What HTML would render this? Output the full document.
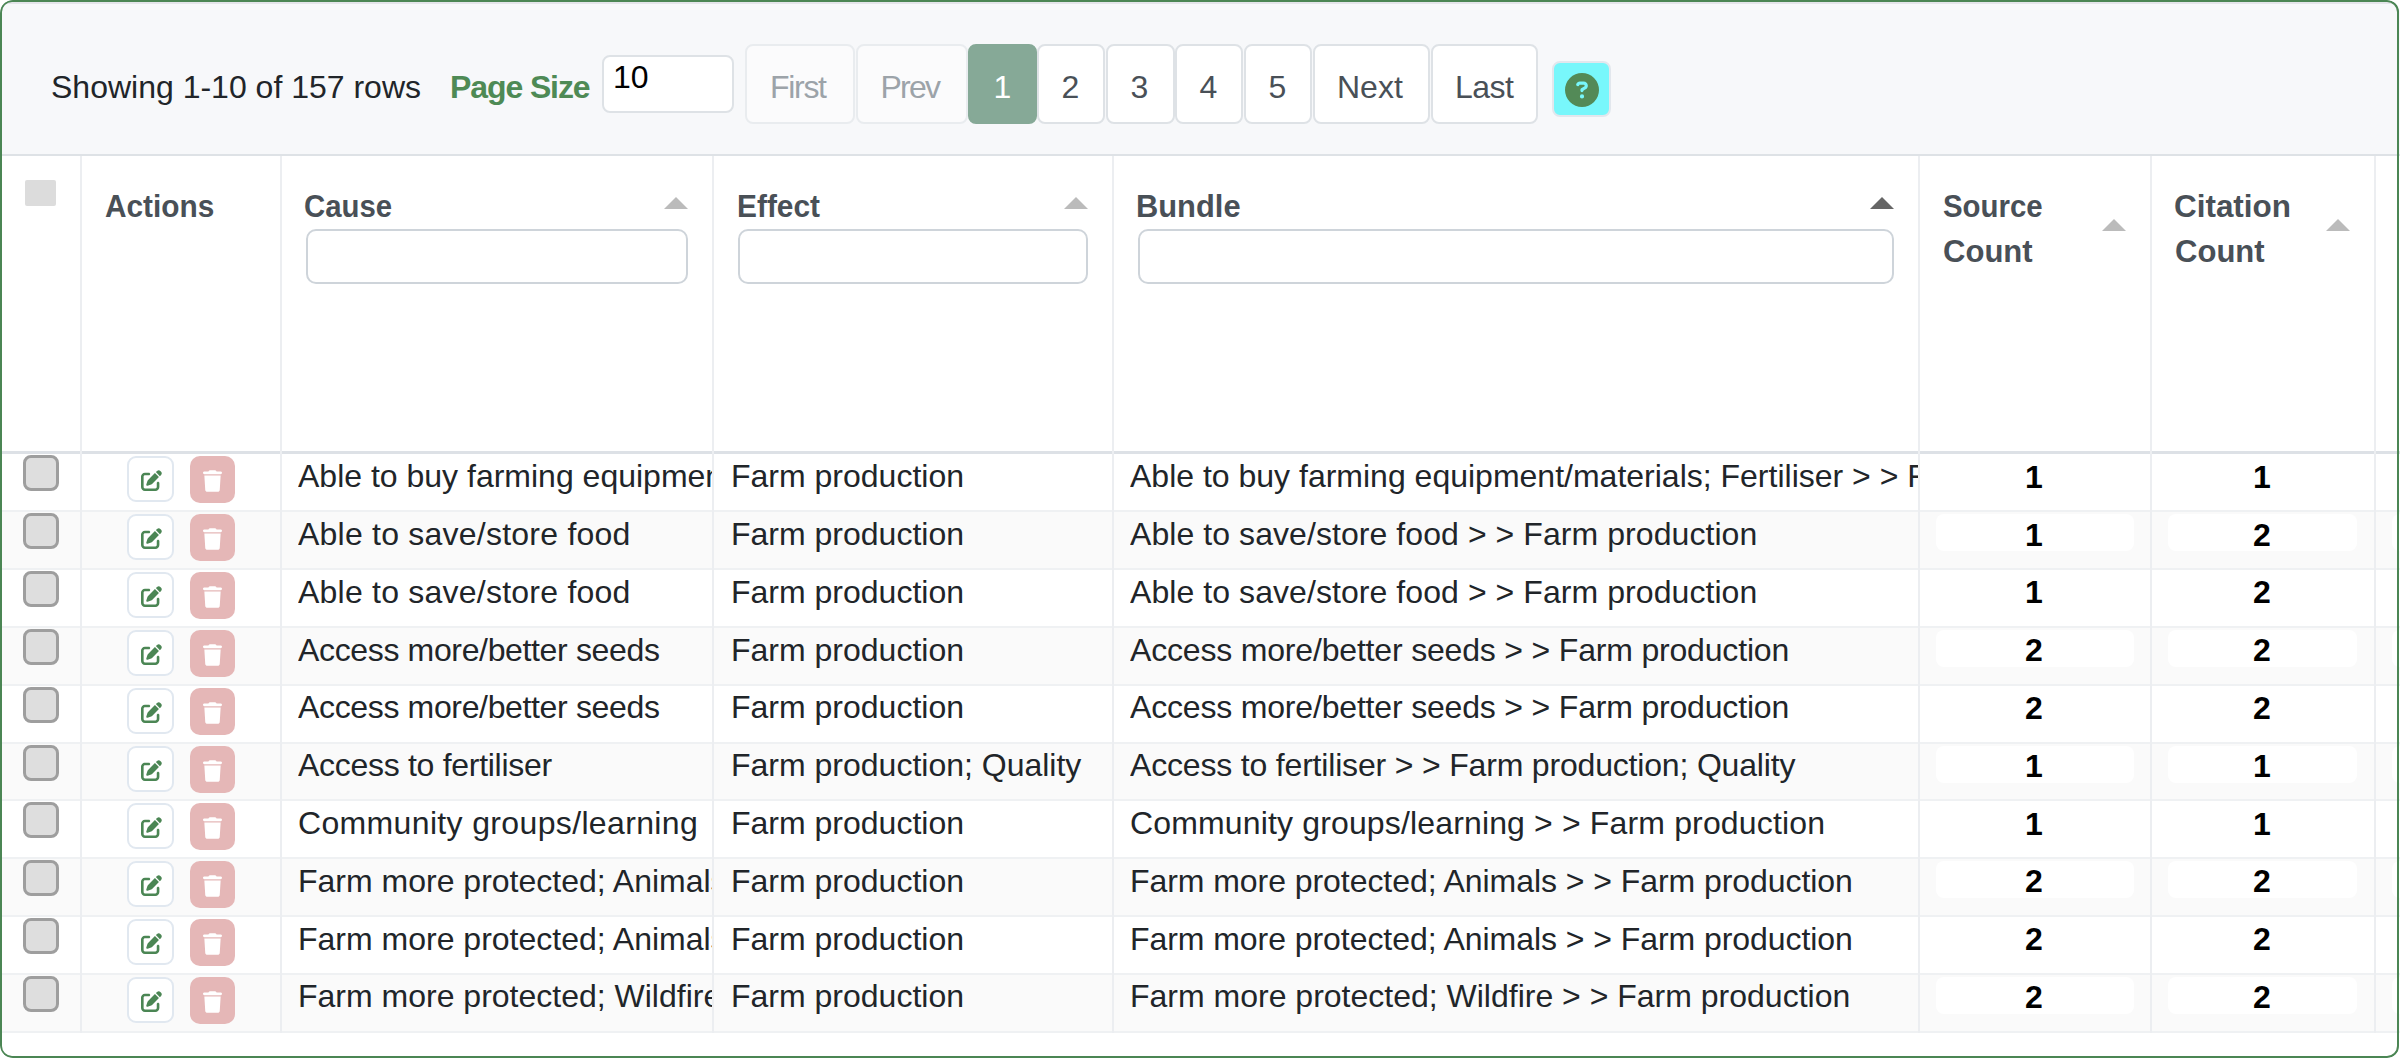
<!DOCTYPE html>
<html><head><meta charset="utf-8"><title>Table</title>
<style>
html,body{margin:0;padding:0;}
body{width:2400px;height:1058px;overflow:hidden;background:#fff;position:relative;font-family:"Liberation Sans",sans-serif;}
.a{position:absolute;}
.t{position:absolute;white-space:nowrap;font-size:32px;line-height:36px;color:#212529;}
.hd{font-weight:bold;color:#495057;}
.pg{position:absolute;top:44px;height:80px;box-sizing:border-box;border:2px solid #dee2e6;border-radius:8px;background:#fff;}
.pgd{background:#fbfbfc;border-color:#e9ecef;}
.pgt{position:absolute;white-space:nowrap;font-size:32px;line-height:36px;color:#495057;top:69px;}
.inp{position:absolute;box-sizing:border-box;border:2px solid #ced4da;border-radius:10px;background:#fff;}
.vl{position:absolute;top:156px;height:877px;width:2px;background:#eceef1;}
.hl{position:absolute;left:0;width:2400px;height:2px;background:#eff1f3;}
.stripe{position:absolute;left:0;width:2400px;background:#fafafa;}
.cb{position:absolute;left:23px;width:36px;height:36px;box-sizing:border-box;border:3px solid #9e9e9e;border-radius:8px;background:#dedede;}
.eb{position:absolute;left:127px;width:47px;height:46px;box-sizing:border-box;border:2px solid #e1e8f0;border-radius:9px;background:#fff;}
.eb svg{position:absolute;left:11.5px;top:12px;}
.db{position:absolute;left:190px;width:45px;height:47px;border-radius:10px;background:#e5b7b7;}
.db svg{position:absolute;left:13px;top:14px;}
.cell{position:absolute;white-space:nowrap;overflow:hidden;font-size:32px;line-height:36px;color:#212529;}
.num{position:absolute;font-size:32px;line-height:36px;color:#000;font-weight:bold;text-align:center;}
.wb{position:absolute;height:37px;border-radius:8px;background:#fff;}
.arr{position:absolute;width:0;height:0;border-left:12px solid transparent;border-right:12px solid transparent;border-bottom:12px solid #bbb;}
</style></head><body>

<div class="a" style="left:0;top:0;width:2400px;height:1058px;border-radius:13px;overflow:hidden">
<div class="a" style="left:0;top:0;width:2400px;height:154px;background:#f7f8fa"></div>
<div class="a" style="left:0;top:2px;width:2400px;height:2px;background:#e4e5ea"></div>
<div class="a" style="left:0;top:154px;width:2400px;height:2px;background:#dee2e6"></div>
<div class="t" style="left:51px;top:69px">Showing 1-10 of 157 rows</div>
<div class="t" style="left:450px;top:69px;font-weight:bold;color:#4e8a55;letter-spacing:-1.1px">Page Size</div>
<div class="a" style="left:602px;top:55px;width:132px;height:58px;box-sizing:border-box;border:2px solid #dee2e6;border-radius:8px;background:#fff"></div>
<div class="t" style="left:613px;top:59px;color:#000">10</div>
<div class="pg pgd" style="left:745px;width:110px;"></div>
<div class="pgt" style="left:770px;color:#9ca3a9;letter-spacing:-1.3px;">First</div>
<div class="pg pgd" style="left:856px;width:112px;"></div>
<div class="pgt" style="left:880.5px;color:#9ca3a9;letter-spacing:-1.8px;">Prev</div>
<div class="pg" style="left:968px;width:69px;background:#86a997;border-color:#86a997;"></div>
<div class="pgt" style="left:993.5px;color:#fff;">1</div>
<div class="pg" style="left:1037px;width:68px;"></div>
<div class="pgt" style="left:1061.5px;color:#495057;">2</div>
<div class="pg" style="left:1106px;width:68.5px;"></div>
<div class="pgt" style="left:1130.5px;color:#495057;">3</div>
<div class="pg" style="left:1175px;width:68px;"></div>
<div class="pgt" style="left:1199.5px;color:#495057;">4</div>
<div class="pg" style="left:1244px;width:68px;"></div>
<div class="pgt" style="left:1268.5px;color:#495057;">5</div>
<div class="pg" style="left:1313px;width:117px;"></div>
<div class="pgt" style="left:1337px;color:#495057;letter-spacing:0px;">Next</div>
<div class="pg" style="left:1431px;width:106.5px;"></div>
<div class="pgt" style="left:1455px;color:#495057;letter-spacing:-0.5px;">Last</div>
<div class="a" style="left:1552px;top:61px;width:59px;height:56px;box-sizing:border-box;border:2px solid #e2e7ed;border-radius:8px;background:#78f7fb"></div>
<div class="a" style="left:1565px;top:73px;width:34px;height:34px"><svg viewBox="0 0 512 512" width="34" height="34"><path fill="#538a57" d="M256 512A256 256 0 1 0 256 0a256 256 0 1 0 0 512zM169.8 165.3c7.9-22.3 29.1-37.3 52.8-37.3h58.3c34.9 0 63.1 28.3 63.1 63.1c0 22.6-12.1 43.5-31.7 54.8L280 264.4c-.2 13-10.9 23.6-24 23.6c-13.3 0-24-10.7-24-24V250.5c0-8.6 4.6-16.5 12.1-20.8l44.3-25.4c4.7-2.7 7.6-7.7 7.6-13.1c0-8.4-6.8-15.1-15.1-15.1H222.6c-3.4 0-6.4 2.1-7.5 5.3l-.4 1.2c-4.4 12.5-18.2 19-30.6 14.6s-19-18.2-14.6-30.6l.4-1.2zM224 352a32 32 0 1 1 64 0 32 32 0 1 1 -64 0z"/></svg></div>
<div class="a" style="left:25px;top:180px;width:31px;height:26px;background:#dcdcdc;border-radius:2px"></div>
<div class="t hd" style="left:105px;top:188px;transform:scaleX(0.932);transform-origin:0 0">Actions</div>
<div class="t hd" style="left:304px;top:188px;transform:scaleX(0.917);transform-origin:0 0">Cause</div>
<div class="t hd" style="left:737px;top:188px;transform:scaleX(0.934);transform-origin:0 0">Effect</div>
<div class="t hd" style="left:1136px;top:188px;transform:scaleX(0.964);transform-origin:0 0">Bundle</div>
<div class="t hd" style="left:1943px;top:188px;transform:scaleX(0.919);transform-origin:0 0">Source</div>
<div class="t hd" style="left:1943px;top:233px;transform:scaleX(0.97);transform-origin:0 0">Count</div>
<div class="t hd" style="left:2174px;top:188px;transform:scaleX(0.982);transform-origin:0 0">Citation</div>
<div class="t hd" style="left:2175px;top:233px;transform:scaleX(0.97);transform-origin:0 0">Count</div>
<div class="arr" style="left:664px;top:197px"></div>
<div class="arr" style="left:1064px;top:197px"></div>
<div class="arr" style="left:1870px;top:197px;border-bottom-color:#666"></div>
<div class="arr" style="left:2102px;top:219px"></div>
<div class="arr" style="left:2326px;top:219px"></div>
<div class="inp" style="left:306px;top:229px;width:382px;height:55px"></div>
<div class="inp" style="left:738px;top:229px;width:350px;height:55px"></div>
<div class="inp" style="left:1138px;top:229px;width:756px;height:55px"></div>
<div class="a" style="left:0;top:451px;width:2400px;height:3px;background:#dde1e6"></div>
<div class="hl" style="top:510px"></div>
<div class="cb" style="top:455px"></div>
<div class="eb" style="top:456px"><svg viewBox="0 0 512 512" width="21" height="21"><path fill="#4b8654" d="M471.6 21.7c-21.9-21.9-57.3-21.9-79.2 0L362.3 51.7l97.9 97.9 30.1-30.1c21.9-21.9 21.9-57.3 0-79.2L471.6 21.7zm-299.2 220c-6.1 6.1-10.8 13.6-13.5 21.9l-29.6 88.8c-2.9 8.6-.6 18.1 5.8 24.6s15.9 8.7 24.6 5.8l88.8-29.6c8.2-2.7 15.7-7.4 21.9-13.5L437.7 172.3 339.7 74.3 172.4 241.7zM96 64C43 64 0 107 0 160V416c0 53 43 96 96 96H352c53 0 96-43 96-96V320c0-17.7-14.3-32-32-32s-32 14.3-32 32v96c0 17.7-14.3 32-32 32H96c-17.7 0-32-14.3-32-32V160c0-17.7 14.3-32 32-32h96c17.7 0 32-14.3 32-32s-14.3-32-32-32H96z"/></svg></div>
<div class="db" style="top:456px"><svg viewBox="0 0 448 512" width="19" height="22"><path fill="#fff" d="M135.2 17.7L128 32H32C14.3 32 0 46.3 0 64S14.3 96 32 96H416c17.7 0 32-14.3 32-32s-14.3-32-32-32H320l-7.2-14.3C307.4 6.8 296.3 0 284.2 0H163.8c-12.1 0-23.2 6.8-28.6 17.7zM416 128H32L53.2 467c1.6 25.3 22.6 45 47.9 45H346.9c25.3 0 46.3-19.7 47.9-45L416 128z"/></svg></div>
<div class="cell" style="left:298px;top:458.4px;width:414px;letter-spacing:0px">Able to buy farming equipment/materials; Fertiliser</div>
<div class="cell" style="left:731px;top:458.4px;width:382px">Farm production</div>
<div class="cell" style="left:1130px;top:458.4px;width:788px;letter-spacing:0px">Able to buy farming equipment/materials; Fertiliser &gt; &gt; Farm production</div>
<div class="num" style="left:1918px;top:459px;width:232px">1</div>
<div class="num" style="left:2150px;top:459px;width:224px">1</div>
<div class="stripe" style="top:512px;height:58px"></div>
<div class="wb" style="left:1936px;top:514px;width:198px"></div>
<div class="wb" style="left:2168px;top:514px;width:189px"></div>
<div class="wb" style="left:2392px;top:514px;width:40px"></div>
<div class="hl" style="top:568px"></div>
<div class="cb" style="top:513px"></div>
<div class="eb" style="top:514px"><svg viewBox="0 0 512 512" width="21" height="21"><path fill="#4b8654" d="M471.6 21.7c-21.9-21.9-57.3-21.9-79.2 0L362.3 51.7l97.9 97.9 30.1-30.1c21.9-21.9 21.9-57.3 0-79.2L471.6 21.7zm-299.2 220c-6.1 6.1-10.8 13.6-13.5 21.9l-29.6 88.8c-2.9 8.6-.6 18.1 5.8 24.6s15.9 8.7 24.6 5.8l88.8-29.6c8.2-2.7 15.7-7.4 21.9-13.5L437.7 172.3 339.7 74.3 172.4 241.7zM96 64C43 64 0 107 0 160V416c0 53 43 96 96 96H352c53 0 96-43 96-96V320c0-17.7-14.3-32-32-32s-32 14.3-32 32v96c0 17.7-14.3 32-32 32H96c-17.7 0-32-14.3-32-32V160c0-17.7 14.3-32 32-32h96c17.7 0 32-14.3 32-32s-14.3-32-32-32H96z"/></svg></div>
<div class="db" style="top:514px"><svg viewBox="0 0 448 512" width="19" height="22"><path fill="#fff" d="M135.2 17.7L128 32H32C14.3 32 0 46.3 0 64S14.3 96 32 96H416c17.7 0 32-14.3 32-32s-14.3-32-32-32H320l-7.2-14.3C307.4 6.8 296.3 0 284.2 0H163.8c-12.1 0-23.2 6.8-28.6 17.7zM416 128H32L53.2 467c1.6 25.3 22.6 45 47.9 45H346.9c25.3 0 46.3-19.7 47.9-45L416 128z"/></svg></div>
<div class="cell" style="left:298px;top:516.17px;width:414px;letter-spacing:0.23px">Able to save/store food</div>
<div class="cell" style="left:731px;top:516.17px;width:382px">Farm production</div>
<div class="cell" style="left:1130px;top:516.17px;width:788px;letter-spacing:0.07px">Able to save/store food &gt; &gt; Farm production</div>
<div class="num" style="left:1918px;top:517px;width:232px">1</div>
<div class="num" style="left:2150px;top:517px;width:224px">2</div>
<div class="hl" style="top:626px"></div>
<div class="cb" style="top:571px"></div>
<div class="eb" style="top:572px"><svg viewBox="0 0 512 512" width="21" height="21"><path fill="#4b8654" d="M471.6 21.7c-21.9-21.9-57.3-21.9-79.2 0L362.3 51.7l97.9 97.9 30.1-30.1c21.9-21.9 21.9-57.3 0-79.2L471.6 21.7zm-299.2 220c-6.1 6.1-10.8 13.6-13.5 21.9l-29.6 88.8c-2.9 8.6-.6 18.1 5.8 24.6s15.9 8.7 24.6 5.8l88.8-29.6c8.2-2.7 15.7-7.4 21.9-13.5L437.7 172.3 339.7 74.3 172.4 241.7zM96 64C43 64 0 107 0 160V416c0 53 43 96 96 96H352c53 0 96-43 96-96V320c0-17.7-14.3-32-32-32s-32 14.3-32 32v96c0 17.7-14.3 32-32 32H96c-17.7 0-32-14.3-32-32V160c0-17.7 14.3-32 32-32h96c17.7 0 32-14.3 32-32s-14.3-32-32-32H96z"/></svg></div>
<div class="db" style="top:572px"><svg viewBox="0 0 448 512" width="19" height="22"><path fill="#fff" d="M135.2 17.7L128 32H32C14.3 32 0 46.3 0 64S14.3 96 32 96H416c17.7 0 32-14.3 32-32s-14.3-32-32-32H320l-7.2-14.3C307.4 6.8 296.3 0 284.2 0H163.8c-12.1 0-23.2 6.8-28.6 17.7zM416 128H32L53.2 467c1.6 25.3 22.6 45 47.9 45H346.9c25.3 0 46.3-19.7 47.9-45L416 128z"/></svg></div>
<div class="cell" style="left:298px;top:573.94px;width:414px;letter-spacing:0.23px">Able to save/store food</div>
<div class="cell" style="left:731px;top:573.94px;width:382px">Farm production</div>
<div class="cell" style="left:1130px;top:573.94px;width:788px;letter-spacing:0.07px">Able to save/store food &gt; &gt; Farm production</div>
<div class="num" style="left:1918px;top:574px;width:232px">1</div>
<div class="num" style="left:2150px;top:574px;width:224px">2</div>
<div class="stripe" style="top:628px;height:58px"></div>
<div class="wb" style="left:1936px;top:630px;width:198px"></div>
<div class="wb" style="left:2168px;top:630px;width:189px"></div>
<div class="wb" style="left:2392px;top:630px;width:40px"></div>
<div class="hl" style="top:684px"></div>
<div class="cb" style="top:629px"></div>
<div class="eb" style="top:630px"><svg viewBox="0 0 512 512" width="21" height="21"><path fill="#4b8654" d="M471.6 21.7c-21.9-21.9-57.3-21.9-79.2 0L362.3 51.7l97.9 97.9 30.1-30.1c21.9-21.9 21.9-57.3 0-79.2L471.6 21.7zm-299.2 220c-6.1 6.1-10.8 13.6-13.5 21.9l-29.6 88.8c-2.9 8.6-.6 18.1 5.8 24.6s15.9 8.7 24.6 5.8l88.8-29.6c8.2-2.7 15.7-7.4 21.9-13.5L437.7 172.3 339.7 74.3 172.4 241.7zM96 64C43 64 0 107 0 160V416c0 53 43 96 96 96H352c53 0 96-43 96-96V320c0-17.7-14.3-32-32-32s-32 14.3-32 32v96c0 17.7-14.3 32-32 32H96c-17.7 0-32-14.3-32-32V160c0-17.7 14.3-32 32-32h96c17.7 0 32-14.3 32-32s-14.3-32-32-32H96z"/></svg></div>
<div class="db" style="top:630px"><svg viewBox="0 0 448 512" width="19" height="22"><path fill="#fff" d="M135.2 17.7L128 32H32C14.3 32 0 46.3 0 64S14.3 96 32 96H416c17.7 0 32-14.3 32-32s-14.3-32-32-32H320l-7.2-14.3C307.4 6.8 296.3 0 284.2 0H163.8c-12.1 0-23.2 6.8-28.6 17.7zM416 128H32L53.2 467c1.6 25.3 22.6 45 47.9 45H346.9c25.3 0 46.3-19.7 47.9-45L416 128z"/></svg></div>
<div class="cell" style="left:298px;top:631.71px;width:414px;letter-spacing:-0.35px">Access more/better seeds</div>
<div class="cell" style="left:731px;top:631.71px;width:382px">Farm production</div>
<div class="cell" style="left:1130px;top:631.71px;width:788px;letter-spacing:-0.18px">Access more/better seeds &gt; &gt; Farm production</div>
<div class="num" style="left:1918px;top:632px;width:232px">2</div>
<div class="num" style="left:2150px;top:632px;width:224px">2</div>
<div class="hl" style="top:742px"></div>
<div class="cb" style="top:687px"></div>
<div class="eb" style="top:688px"><svg viewBox="0 0 512 512" width="21" height="21"><path fill="#4b8654" d="M471.6 21.7c-21.9-21.9-57.3-21.9-79.2 0L362.3 51.7l97.9 97.9 30.1-30.1c21.9-21.9 21.9-57.3 0-79.2L471.6 21.7zm-299.2 220c-6.1 6.1-10.8 13.6-13.5 21.9l-29.6 88.8c-2.9 8.6-.6 18.1 5.8 24.6s15.9 8.7 24.6 5.8l88.8-29.6c8.2-2.7 15.7-7.4 21.9-13.5L437.7 172.3 339.7 74.3 172.4 241.7zM96 64C43 64 0 107 0 160V416c0 53 43 96 96 96H352c53 0 96-43 96-96V320c0-17.7-14.3-32-32-32s-32 14.3-32 32v96c0 17.7-14.3 32-32 32H96c-17.7 0-32-14.3-32-32V160c0-17.7 14.3-32 32-32h96c17.7 0 32-14.3 32-32s-14.3-32-32-32H96z"/></svg></div>
<div class="db" style="top:688px"><svg viewBox="0 0 448 512" width="19" height="22"><path fill="#fff" d="M135.2 17.7L128 32H32C14.3 32 0 46.3 0 64S14.3 96 32 96H416c17.7 0 32-14.3 32-32s-14.3-32-32-32H320l-7.2-14.3C307.4 6.8 296.3 0 284.2 0H163.8c-12.1 0-23.2 6.8-28.6 17.7zM416 128H32L53.2 467c1.6 25.3 22.6 45 47.9 45H346.9c25.3 0 46.3-19.7 47.9-45L416 128z"/></svg></div>
<div class="cell" style="left:298px;top:689.48px;width:414px;letter-spacing:-0.35px">Access more/better seeds</div>
<div class="cell" style="left:731px;top:689.48px;width:382px">Farm production</div>
<div class="cell" style="left:1130px;top:689.48px;width:788px;letter-spacing:-0.18px">Access more/better seeds &gt; &gt; Farm production</div>
<div class="num" style="left:1918px;top:690px;width:232px">2</div>
<div class="num" style="left:2150px;top:690px;width:224px">2</div>
<div class="stripe" style="top:744px;height:57px"></div>
<div class="wb" style="left:1936px;top:746px;width:198px"></div>
<div class="wb" style="left:2168px;top:746px;width:189px"></div>
<div class="wb" style="left:2392px;top:746px;width:40px"></div>
<div class="hl" style="top:799px"></div>
<div class="cb" style="top:745px"></div>
<div class="eb" style="top:746px"><svg viewBox="0 0 512 512" width="21" height="21"><path fill="#4b8654" d="M471.6 21.7c-21.9-21.9-57.3-21.9-79.2 0L362.3 51.7l97.9 97.9 30.1-30.1c21.9-21.9 21.9-57.3 0-79.2L471.6 21.7zm-299.2 220c-6.1 6.1-10.8 13.6-13.5 21.9l-29.6 88.8c-2.9 8.6-.6 18.1 5.8 24.6s15.9 8.7 24.6 5.8l88.8-29.6c8.2-2.7 15.7-7.4 21.9-13.5L437.7 172.3 339.7 74.3 172.4 241.7zM96 64C43 64 0 107 0 160V416c0 53 43 96 96 96H352c53 0 96-43 96-96V320c0-17.7-14.3-32-32-32s-32 14.3-32 32v96c0 17.7-14.3 32-32 32H96c-17.7 0-32-14.3-32-32V160c0-17.7 14.3-32 32-32h96c17.7 0 32-14.3 32-32s-14.3-32-32-32H96z"/></svg></div>
<div class="db" style="top:746px"><svg viewBox="0 0 448 512" width="19" height="22"><path fill="#fff" d="M135.2 17.7L128 32H32C14.3 32 0 46.3 0 64S14.3 96 32 96H416c17.7 0 32-14.3 32-32s-14.3-32-32-32H320l-7.2-14.3C307.4 6.8 296.3 0 284.2 0H163.8c-12.1 0-23.2 6.8-28.6 17.7zM416 128H32L53.2 467c1.6 25.3 22.6 45 47.9 45H346.9c25.3 0 46.3-19.7 47.9-45L416 128z"/></svg></div>
<div class="cell" style="left:298px;top:747.25px;width:414px;letter-spacing:-0.29px">Access to fertiliser</div>
<div class="cell" style="left:731px;top:747.25px;width:382px">Farm production; Quality</div>
<div class="cell" style="left:1130px;top:747.25px;width:788px;letter-spacing:-0.18px">Access to fertiliser &gt; &gt; Farm production; Quality</div>
<div class="num" style="left:1918px;top:748px;width:232px">1</div>
<div class="num" style="left:2150px;top:748px;width:224px">1</div>
<div class="hl" style="top:857px"></div>
<div class="cb" style="top:802px"></div>
<div class="eb" style="top:803px"><svg viewBox="0 0 512 512" width="21" height="21"><path fill="#4b8654" d="M471.6 21.7c-21.9-21.9-57.3-21.9-79.2 0L362.3 51.7l97.9 97.9 30.1-30.1c21.9-21.9 21.9-57.3 0-79.2L471.6 21.7zm-299.2 220c-6.1 6.1-10.8 13.6-13.5 21.9l-29.6 88.8c-2.9 8.6-.6 18.1 5.8 24.6s15.9 8.7 24.6 5.8l88.8-29.6c8.2-2.7 15.7-7.4 21.9-13.5L437.7 172.3 339.7 74.3 172.4 241.7zM96 64C43 64 0 107 0 160V416c0 53 43 96 96 96H352c53 0 96-43 96-96V320c0-17.7-14.3-32-32-32s-32 14.3-32 32v96c0 17.7-14.3 32-32 32H96c-17.7 0-32-14.3-32-32V160c0-17.7 14.3-32 32-32h96c17.7 0 32-14.3 32-32s-14.3-32-32-32H96z"/></svg></div>
<div class="db" style="top:803px"><svg viewBox="0 0 448 512" width="19" height="22"><path fill="#fff" d="M135.2 17.7L128 32H32C14.3 32 0 46.3 0 64S14.3 96 32 96H416c17.7 0 32-14.3 32-32s-14.3-32-32-32H320l-7.2-14.3C307.4 6.8 296.3 0 284.2 0H163.8c-12.1 0-23.2 6.8-28.6 17.7zM416 128H32L53.2 467c1.6 25.3 22.6 45 47.9 45H346.9c25.3 0 46.3-19.7 47.9-45L416 128z"/></svg></div>
<div class="cell" style="left:298px;top:805.02px;width:414px;letter-spacing:0.35px">Community groups/learning</div>
<div class="cell" style="left:731px;top:805.02px;width:382px">Farm production</div>
<div class="cell" style="left:1130px;top:805.02px;width:788px;letter-spacing:0.15px">Community groups/learning &gt; &gt; Farm production</div>
<div class="num" style="left:1918px;top:806px;width:232px">1</div>
<div class="num" style="left:2150px;top:806px;width:224px">1</div>
<div class="stripe" style="top:859px;height:58px"></div>
<div class="wb" style="left:1936px;top:861px;width:198px"></div>
<div class="wb" style="left:2168px;top:861px;width:189px"></div>
<div class="wb" style="left:2392px;top:861px;width:40px"></div>
<div class="hl" style="top:915px"></div>
<div class="cb" style="top:860px"></div>
<div class="eb" style="top:861px"><svg viewBox="0 0 512 512" width="21" height="21"><path fill="#4b8654" d="M471.6 21.7c-21.9-21.9-57.3-21.9-79.2 0L362.3 51.7l97.9 97.9 30.1-30.1c21.9-21.9 21.9-57.3 0-79.2L471.6 21.7zm-299.2 220c-6.1 6.1-10.8 13.6-13.5 21.9l-29.6 88.8c-2.9 8.6-.6 18.1 5.8 24.6s15.9 8.7 24.6 5.8l88.8-29.6c8.2-2.7 15.7-7.4 21.9-13.5L437.7 172.3 339.7 74.3 172.4 241.7zM96 64C43 64 0 107 0 160V416c0 53 43 96 96 96H352c53 0 96-43 96-96V320c0-17.7-14.3-32-32-32s-32 14.3-32 32v96c0 17.7-14.3 32-32 32H96c-17.7 0-32-14.3-32-32V160c0-17.7 14.3-32 32-32h96c17.7 0 32-14.3 32-32s-14.3-32-32-32H96z"/></svg></div>
<div class="db" style="top:861px"><svg viewBox="0 0 448 512" width="19" height="22"><path fill="#fff" d="M135.2 17.7L128 32H32C14.3 32 0 46.3 0 64S14.3 96 32 96H416c17.7 0 32-14.3 32-32s-14.3-32-32-32H320l-7.2-14.3C307.4 6.8 296.3 0 284.2 0H163.8c-12.1 0-23.2 6.8-28.6 17.7zM416 128H32L53.2 467c1.6 25.3 22.6 45 47.9 45H346.9c25.3 0 46.3-19.7 47.9-45L416 128z"/></svg></div>
<div class="cell" style="left:298px;top:862.79px;width:414px;letter-spacing:0px">Farm more protected; Animals</div>
<div class="cell" style="left:731px;top:862.79px;width:382px">Farm production</div>
<div class="cell" style="left:1130px;top:862.79px;width:788px;letter-spacing:-0.06px">Farm more protected; Animals &gt; &gt; Farm production</div>
<div class="num" style="left:1918px;top:863px;width:232px">2</div>
<div class="num" style="left:2150px;top:863px;width:224px">2</div>
<div class="hl" style="top:973px"></div>
<div class="cb" style="top:918px"></div>
<div class="eb" style="top:919px"><svg viewBox="0 0 512 512" width="21" height="21"><path fill="#4b8654" d="M471.6 21.7c-21.9-21.9-57.3-21.9-79.2 0L362.3 51.7l97.9 97.9 30.1-30.1c21.9-21.9 21.9-57.3 0-79.2L471.6 21.7zm-299.2 220c-6.1 6.1-10.8 13.6-13.5 21.9l-29.6 88.8c-2.9 8.6-.6 18.1 5.8 24.6s15.9 8.7 24.6 5.8l88.8-29.6c8.2-2.7 15.7-7.4 21.9-13.5L437.7 172.3 339.7 74.3 172.4 241.7zM96 64C43 64 0 107 0 160V416c0 53 43 96 96 96H352c53 0 96-43 96-96V320c0-17.7-14.3-32-32-32s-32 14.3-32 32v96c0 17.7-14.3 32-32 32H96c-17.7 0-32-14.3-32-32V160c0-17.7 14.3-32 32-32h96c17.7 0 32-14.3 32-32s-14.3-32-32-32H96z"/></svg></div>
<div class="db" style="top:919px"><svg viewBox="0 0 448 512" width="19" height="22"><path fill="#fff" d="M135.2 17.7L128 32H32C14.3 32 0 46.3 0 64S14.3 96 32 96H416c17.7 0 32-14.3 32-32s-14.3-32-32-32H320l-7.2-14.3C307.4 6.8 296.3 0 284.2 0H163.8c-12.1 0-23.2 6.8-28.6 17.7zM416 128H32L53.2 467c1.6 25.3 22.6 45 47.9 45H346.9c25.3 0 46.3-19.7 47.9-45L416 128z"/></svg></div>
<div class="cell" style="left:298px;top:920.56px;width:414px;letter-spacing:0px">Farm more protected; Animals</div>
<div class="cell" style="left:731px;top:920.56px;width:382px">Farm production</div>
<div class="cell" style="left:1130px;top:920.56px;width:788px;letter-spacing:-0.06px">Farm more protected; Animals &gt; &gt; Farm production</div>
<div class="num" style="left:1918px;top:921px;width:232px">2</div>
<div class="num" style="left:2150px;top:921px;width:224px">2</div>
<div class="stripe" style="top:975px;height:58px"></div>
<div class="wb" style="left:1936px;top:977px;width:198px"></div>
<div class="wb" style="left:2168px;top:977px;width:189px"></div>
<div class="wb" style="left:2392px;top:977px;width:40px"></div>
<div class="hl" style="top:1031px"></div>
<div class="cb" style="top:976px"></div>
<div class="eb" style="top:977px"><svg viewBox="0 0 512 512" width="21" height="21"><path fill="#4b8654" d="M471.6 21.7c-21.9-21.9-57.3-21.9-79.2 0L362.3 51.7l97.9 97.9 30.1-30.1c21.9-21.9 21.9-57.3 0-79.2L471.6 21.7zm-299.2 220c-6.1 6.1-10.8 13.6-13.5 21.9l-29.6 88.8c-2.9 8.6-.6 18.1 5.8 24.6s15.9 8.7 24.6 5.8l88.8-29.6c8.2-2.7 15.7-7.4 21.9-13.5L437.7 172.3 339.7 74.3 172.4 241.7zM96 64C43 64 0 107 0 160V416c0 53 43 96 96 96H352c53 0 96-43 96-96V320c0-17.7-14.3-32-32-32s-32 14.3-32 32v96c0 17.7-14.3 32-32 32H96c-17.7 0-32-14.3-32-32V160c0-17.7 14.3-32 32-32h96c17.7 0 32-14.3 32-32s-14.3-32-32-32H96z"/></svg></div>
<div class="db" style="top:977px"><svg viewBox="0 0 448 512" width="19" height="22"><path fill="#fff" d="M135.2 17.7L128 32H32C14.3 32 0 46.3 0 64S14.3 96 32 96H416c17.7 0 32-14.3 32-32s-14.3-32-32-32H320l-7.2-14.3C307.4 6.8 296.3 0 284.2 0H163.8c-12.1 0-23.2 6.8-28.6 17.7zM416 128H32L53.2 467c1.6 25.3 22.6 45 47.9 45H346.9c25.3 0 46.3-19.7 47.9-45L416 128z"/></svg></div>
<div class="cell" style="left:298px;top:978.33px;width:414px;letter-spacing:0px">Farm more protected; Wildfire</div>
<div class="cell" style="left:731px;top:978.33px;width:382px">Farm production</div>
<div class="cell" style="left:1130px;top:978.33px;width:788px;letter-spacing:0px">Farm more protected; Wildfire &gt; &gt; Farm production</div>
<div class="num" style="left:1918px;top:979px;width:232px">2</div>
<div class="num" style="left:2150px;top:979px;width:224px">2</div>
<div class="vl" style="left:80px"></div>
<div class="vl" style="left:280px"></div>
<div class="vl" style="left:712px"></div>
<div class="vl" style="left:1112px"></div>
<div class="vl" style="left:1918px"></div>
<div class="vl" style="left:2150px"></div>
<div class="vl" style="left:2374px"></div>
<div class="a" style="left:0;top:0;width:2399px;height:1058px;box-sizing:border-box;border:2px solid #4b8654;border-radius:12px"></div>
</div>
</body></html>
